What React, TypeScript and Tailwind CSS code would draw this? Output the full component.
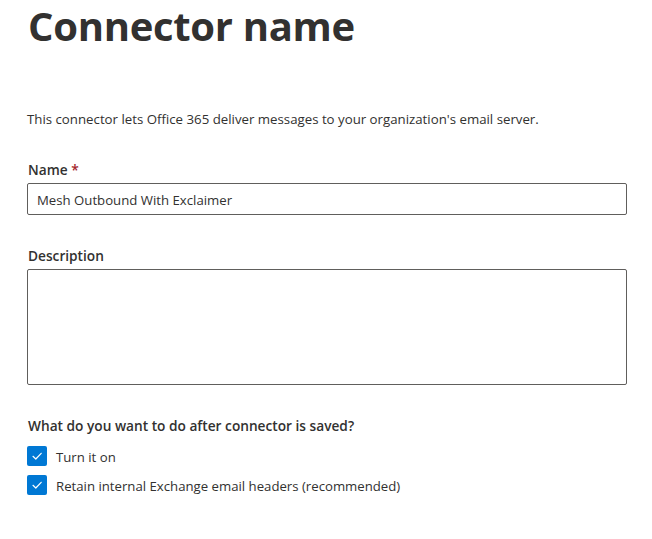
const font = { fontFamily: '"Segoe UI", "Open Sans", sans-serif' };

function Check() {
  return (
    <span className="flex h-5 w-5 shrink-0 items-center justify-center rounded-[2px] bg-[#0078d4]">
      <svg width="12" height="12" viewBox="0 0 12 12" fill="none">
        <path d="M2 6.3 L4.8 9 L10.2 3.3" stroke="white" strokeWidth="1.2" strokeLinecap="round" strokeLinejoin="round" />
      </svg>
    </span>
  );
}

export default function App() {
  return (
    <div className="min-h-[539px] w-[652px] bg-white text-[#323130]" style={font}>
      <div className="pl-[27px] pr-[25px]">
        <h1 className="pl-px text-[40px] font-bold leading-[52px] tracking-[-0.3px] text-[#323130]">Connector name</h1>

        <p className="mt-[57px] text-[13.25px] leading-[20px]">
          This connector lets Office 365 deliver messages to your organization's email server.
        </p>

        <div className="mt-[30px]">
          <label className="block pl-px pt-px text-[13.7px] font-semibold leading-[20px]">
            Name <span className="text-[#a4262c]">*</span>
          </label>
          <div className="mt-[3px] flex h-[32px] w-[600px] items-center rounded-[2px] border border-[#605e5c] px-[9px] pt-[3px] text-[13.2px]">
            Mesh Outbound With Exclaimer
          </div>
        </div>

        <div className="mt-[30px]">
          <label className="block pl-px pt-px text-[13.7px] font-semibold leading-[20px]">Description</label>
          <div className="mt-[3px] h-[116px] w-[600px] rounded-[2px] border border-[#605e5c]" />
        </div>

        <div className="mt-[30px]">
          <p className="pl-px pt-px text-[13.7px] font-semibold leading-[20px]">What do you want to do after connector is saved?</p>
          <div className="mt-[10px] flex flex-col gap-[9px]">
            <div className="flex h-5 items-center gap-[9px] text-[13.2px]">
              <Check />
              <span className="pt-[2px] leading-[18px]">Turn it on</span>
            </div>
            <div className="flex h-5 items-center gap-[9px] text-[13.2px]">
              <Check />
              <span className="pt-[2px] leading-[18px]">Retain internal Exchange email headers (recommended)</span>
            </div>
          </div>
        </div>
      </div>
    </div>
  );
}
